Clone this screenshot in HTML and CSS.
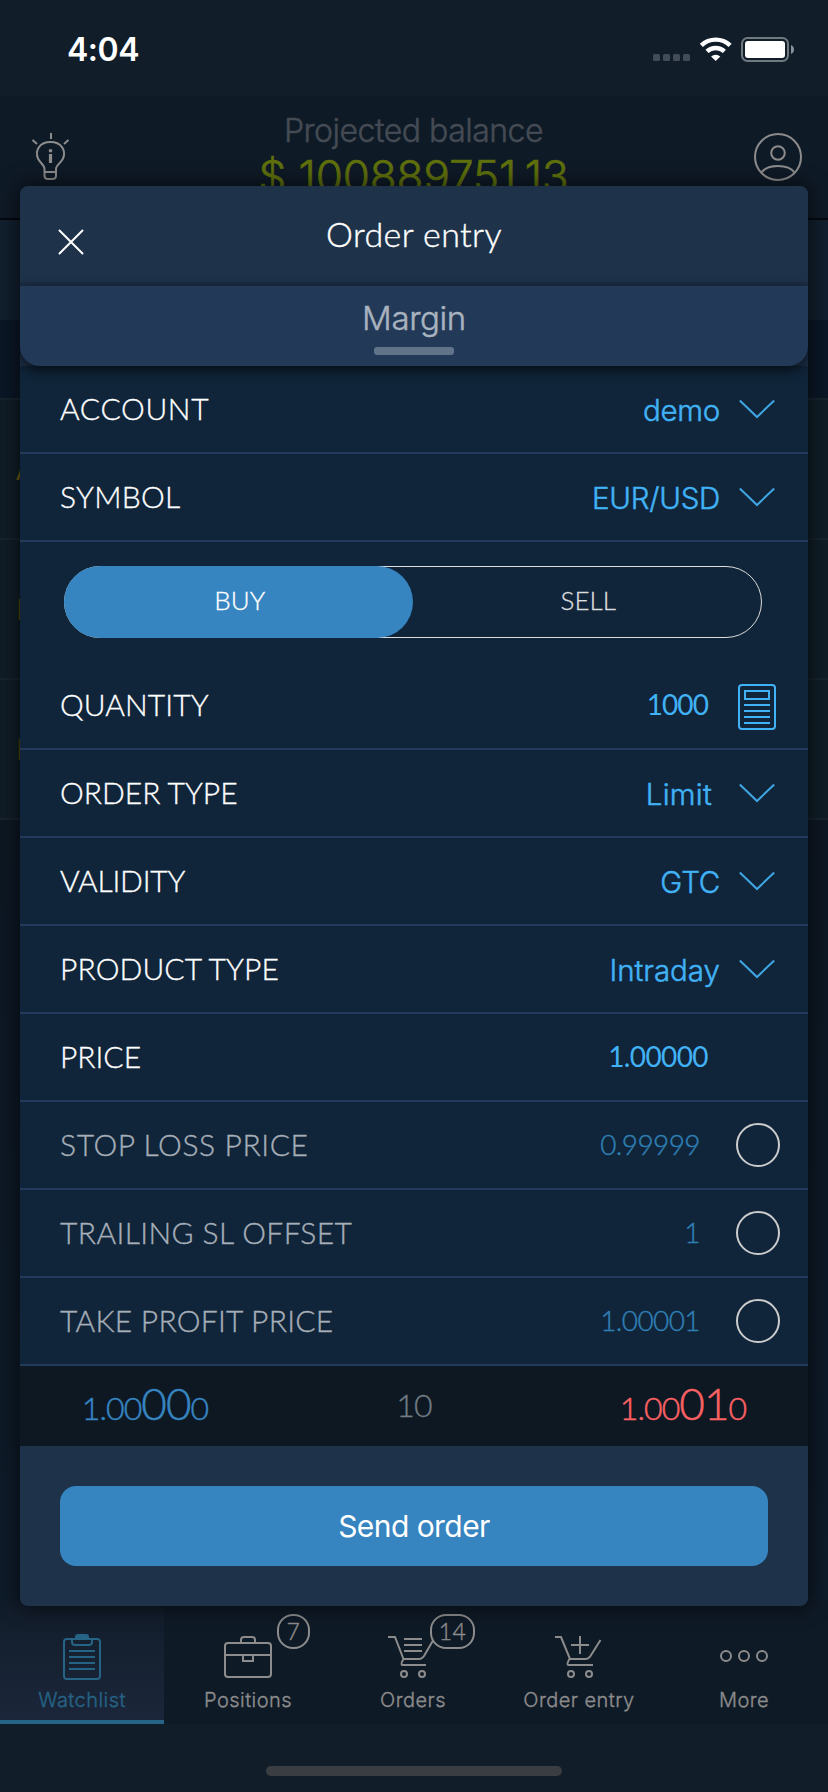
FILE: index.html
```html
<!DOCTYPE html>
<html lang="en">
<head>
<meta charset="utf-8">
<title>Order entry</title>
<link rel="stylesheet" href="styles.css">
</head>
<body>
<div class="screen">
  <header class="status">
    <span class="time">4:04</span>
    <svg class="status-icons" width="144" height="30" viewBox="652 35 144 30">
      <g fill="#414c57"><rect x="653" y="54" width="7" height="7" rx="1.5"/><rect x="663" y="54" width="7" height="7" rx="1.5"/><rect x="673" y="54" width="7" height="7" rx="1.5"/><rect x="683" y="54" width="7" height="7" rx="1.5"/></g>
      <g fill="none" stroke="#fff" stroke-width="4.4"><path d="M701.3 45.3a21 21 0 0 1 28.800 0"/><path d="M707 51.400a12.800 12.800 0 0 1 17.400 0"/></g>
      <path d="M715.700 61l-4.600-4.400a6.800 6.800 0 0 1 9.200 0z" fill="#fff"/>
      <rect x="742" y="38" width="46" height="23" rx="5.5" fill="none" stroke="#707880" stroke-width="2"/>
      <rect x="745" y="41" width="40" height="17" rx="3" fill="#fff"/>
      <path d="M791 45q3 1.500 3 4.500t-3 4.500z" fill="#8a9299"/>
    </svg>
  </header>
  <div class="account-bar">
    <svg class="bulb" width="46" height="52" viewBox="28 130 46 52" fill="none" stroke="#8c8c8c" stroke-width="2">
      <path d="M51 133v6M32.500 140l4.500 4M68.500 140l-4.500 4"/>
      <path d="M44.500 172V169C44.500 165 40 163 38 158.500C34.500 150 40 142 50.500 142S66.500 150 63 158.500C61 163 56 165 56 169V172zM44.500 172V175.500Q44.500 179 48 179H52.500Q56 179 56 175.500V172"/>
      <path d="M50.500 149.300v3M50.500 154v9" stroke-width="3.200"/>
    </svg>
    <div class="balance">
      <div class="balance-title">Projected balance</div>
      <div class="balance-value">$ 100889751.13</div>
    </div>
    <svg class="user" width="50" height="50" viewBox="753 132 50 50" fill="none" stroke="#8c8c8c" stroke-width="2">
      <circle cx="778" cy="157" r="23"/><circle cx="778" cy="153" r="6.800"/><path d="M761.500 172.500C765 167.500 772 166 778 166S791 167.500 794.500 172.500"/>
    </svg>
  </div>
  <div class="watch-top"></div>
  <div class="watch-head"></div>
  <div class="watch-row">A</div>
  <div class="watch-row dim">E</div>
  <div class="watch-row dim">E</div>
  <div class="watch-rest"></div>
  <nav class="tabs">
    <div class="tab active">
      <svg width="48" height="50" viewBox="58 1630 48 50" fill="none" stroke="#266485" stroke-width="2"><rect x="64" y="1639" width="36" height="40" rx="3"/><path d="M72 1639v3q0 3 3 3h14q3 0 3-3v-3"/><path d="M75 1639v-2q0-3 3-3h8q3 0 3 3v2z" fill="#266485" stroke="none"/><path d="M69 1651h26M69 1657h26M69 1663h26M69 1669h26"/></svg>
      <span class="t1">Watchlist</span>
    </div>
    <div class="tab">
      <svg width="52" height="50" viewBox="222 1630 52 50" fill="none" stroke="#8c8c8c" stroke-width="2"><rect x="225" y="1643" width="46" height="34" rx="3"/><path d="M241 1643v-3q0-3 3-3h8q3 0 3 3v3M225 1655h46M243 1655v6h10v-6"/></svg>
      <span class="t2">Positions</span>
      <b class="badge b7">7</b>
    </div>
    <div class="tab">
      <svg width="52" height="50" viewBox="388 1630 52 50" fill="none" stroke="#8c8c8c" stroke-width="2"><path d="M389 1637h7l8.500 22h15.500q3 0 5-3l9-15.500M404.500 1659q-3 5-1.500 6h24M405 1639h18M405 1645h18M405 1651h18"/><circle cx="405" cy="1674" r="3"/><circle cx="423" cy="1674" r="3"/></svg>
      <span class="t3">Orders</span>
      <b class="badge b14">14</b>
    </div>
    <div class="tab">
      <svg width="52" height="50" viewBox="553 1630 52 50" fill="none" stroke="#8c8c8c" stroke-width="2"><path d="M555 1637h6l9 22h15.500q3 0 5-3l10-16M569.500 1659q-3 5-1.500 6h25M571 1645h18M580 1636v18"/><circle cx="571" cy="1674" r="3"/><circle cx="589" cy="1674" r="3"/></svg>
      <span class="t4">Order entry</span>
    </div>
    <div class="tab">
      <svg width="52" height="50" viewBox="718 1630 52 50" fill="none" stroke="#8c8c8c" stroke-width="2"><circle cx="726" cy="1656" r="5"/><circle cx="744" cy="1656" r="5"/><circle cx="762" cy="1656" r="5"/></svg>
      <span class="t5">More</span>
    </div>
  </nav>
  <footer class="home"><div class="home-bar"></div></footer>

  <section class="modal">
    <div class="modal-head">
      <svg class="close" width="26" height="26" viewBox="0 0 26 26" fill="none" stroke="#fff" stroke-width="2" stroke-linecap="round"><path d="M1.500 1.500l23 23M24.500 1.500l-23 23"/></svg>
      <h1>Order entry</h1>
    </div>
    <div class="margin-wrap"><div class="margin"><span>Margin</span><i class="grip"></i></div></div>
    <div class="row"><label class="l1">ACCOUNT</label><span class="sel v1">demo</span><svg class="chev" viewBox="0 0 36 20"><path d="M.8 1.500L18 18 35.200 1.500"/></svg></div>
    <div class="row"><label class="l2">SYMBOL</label><span class="sel v2">EUR/USD</span><svg class="chev" viewBox="0 0 36 20"><path d="M.8 1.500L18 18 35.200 1.500"/></svg></div>
    <div class="toggle-wrap"><div class="toggle"><span class="buy">BUY</span><span class="sell">SELL</span></div></div>
    <div class="row"><label class="l3">QUANTITY</label><span class="num v3">1000</span><svg class="calc" width="38" height="46" viewBox="0 0 38 46" fill="none" stroke="#41b2f5" stroke-width="2"><rect x="1" y="1" width="36" height="44" rx="3"/><rect x="7" y="7" width="24" height="8"/><path d="M6 21h26M6 27h26M6 33h26M6 39h26"/></svg></div>
    <div class="row"><label class="l4">ORDER TYPE</label><span class="sel v4">Limit</span><svg class="chev" viewBox="0 0 36 20"><path d="M.8 1.500L18 18 35.200 1.500"/></svg></div>
    <div class="row"><label class="l5">VALIDITY</label><span class="sel v5">GTC</span><svg class="chev" viewBox="0 0 36 20"><path d="M.8 1.500L18 18 35.200 1.500"/></svg></div>
    <div class="row"><label class="l6">PRODUCT TYPE</label><span class="sel v6">Intraday</span><svg class="chev" viewBox="0 0 36 20"><path d="M.8 1.500L18 18 35.200 1.500"/></svg></div>
    <div class="row"><label class="l7">PRICE</label><span class="num v7">1.00000</span></div>
    <div class="row off"><label class="l8">STOP LOSS PRICE</label><span class="num v8">0.99999</span><i class="radio"></i></div>
    <div class="row off"><label class="l9">TRAILING SL OFFSET</label><span class="num v9">1</span><i class="radio"></i></div>
    <div class="row off"><label class="l10">TAKE PROFIT PRICE</label><span class="num v10">1.00001</span><i class="radio"></i></div>
    <div class="quotes"><span class="bid">1.00<big>00</big>0</span><span class="spread">10</span><span class="ask">1.00<big>01</big>0</span></div>
    <div class="send-wrap"><button class="send">Send order</button></div>
  </section>
</div>
</body>
</html>
```
FILE: styles.css
```css
* { box-sizing: border-box; }
body { margin: 0; background: #0f1a27; font-family: Inter, "Liberation Sans", sans-serif; }
svg { display: block; flex: none; }
.screen { position: relative; width: 828px; height: 1792px; overflow: hidden; display: flex; flex-direction: column; white-space: nowrap; }

.status { height: 96px; flex: none; background: #111e2a; display: flex; align-items: flex-start; justify-content: space-between; padding: 35px 32px 0 67px; }
.time { color: #fff; font-size: 32px; font-weight: 600; line-height: 30px; letter-spacing: -0.5px; }
.account-bar { height: 124px; flex: none; background: #0f1a27; border-bottom: 2px solid #04080f; display: flex; justify-content: space-between; align-items: flex-start; padding: 0 25px 0 28px; }
.bulb { margin-top: 34px; }
.user { margin-top: 36px; }
.balance { text-align: center; padding-top: 14px; }
.balance-title { color: #444b54; font-size: 32px; font-weight: 300; line-height: 41px; letter-spacing: -0.5px; -webkit-text-stroke: 0.5px; }
.balance-value { color: #5f700c; font-size: 44px; font-weight: 300; line-height: 43px; letter-spacing: -0.1px; padding-top: 4px; -webkit-text-stroke: 0.7px; }
.watch-top { height: 100px; flex: none; background: #121f2e; }
.watch-head { height: 80px; flex: none; background: #0b1726; border-bottom: 2px solid #18232e; }
.watch-row { height: 140px; flex: none; background: #101d27; border-bottom: 2px solid #18232e; font: 400 28px/138px Lato, sans-serif; color: #6f5c14; padding-left: 16px; }
.watch-row.dim { color: #54430f; }
.watch-rest { flex: 1; background: linear-gradient(#0d1723, #0e1b29); }

.tabs { height: 124px; flex: none; background: #0f1a27; display: grid; grid-template-columns: 164px 168px 162px 170px 160px; }
.tab { position: relative; padding-top: 30px; display: flex; flex-direction: column; align-items: center; color: #8c8c8c; font-size: 20px; font-weight: 300; line-height: 40px; letter-spacing: 0.45px; -webkit-text-stroke: 0.35px; }
.tab.active { color: #266485; background: linear-gradient(#111c2a, #1b263a); border-bottom: 4px solid #266485; }
.badge { position: absolute; top: 14px; height: 35px; border: 2px solid #8c8c8c; border-radius: 16px; background: #0f1a27; font: 300 23px/31px Lato, sans-serif; text-align: center; -webkit-text-stroke: 0.4px; }
.b7 { left: 113px; width: 33px; }
.b14 { left: 98px; width: 45px; }
.home { height: 68px; flex: none; background: #111e2a; padding: 42px 266px 0; }
.home-bar { height: 10px; border-radius: 5px; background: #3a3d41; }

.modal { position: absolute; left: 20px; top: 186px; width: 788px; height: 1420px; border-radius: 8px; overflow: hidden; background: #10253a; display: flex; flex-direction: column; }
.screen::after { content: ""; position: absolute; left: 20px; top: 186px; width: 788px; height: 1420px; border-radius: 8px; box-shadow: 0 0 20px 2px rgba(0,0,0,.6); pointer-events: none; }
.modal-head { position: relative; height: 100px; flex: none; background: #1e334a; border-bottom: 4px solid #1b2d45; display: flex; justify-content: center; }
.close { position: absolute; left: 37.500px; top: 43px; }
h1 { margin: 0; color: #fff; font: 300 34px/96px Lato, sans-serif; letter-spacing: 0.4px; -webkit-text-stroke: 0.4px; }
.margin-wrap { height: 80px; flex: none; background: #1e3049; }
.margin { position: relative; height: 80px; background: #223a58; border-radius: 0 0 20px 20px; box-shadow: 0 4px 14px rgba(0,0,0,.7); display: flex; flex-direction: column; align-items: center; padding-top: 11px; color: #a9b2bf; font-size: 33px; font-weight: 300; line-height: 42px; letter-spacing: -0.4px; -webkit-text-stroke: 0.5px; }
.grip { width: 80px; height: 8px; margin-top: 8px; border-radius: 3px; background: #617388; }
.row { height: 88px; flex: none; border-bottom: 2px solid #223b5a; padding: 0 28px 0 40px; display: flex; align-items: center; }
.row label { flex: 1; color: #fff; font: 300 30px/40px Lato, sans-serif; padding-bottom: 2px; -webkit-text-stroke: 0.35px; }
.row.off label { color: #a6aeb8; }
.l1 { letter-spacing: 0.65px; }
.l2 { letter-spacing: 0.3px; }
.l3, .l6 { letter-spacing: 0.1px; }
.l5 { letter-spacing: -0.2px; }
.l8 { letter-spacing: 0.6px; }
.l9 { letter-spacing: 0.4px; }
.l10 { letter-spacing: 0.25px; }
.sel { color: #41b2f5; font-size: 29.500px; font-weight: 300; -webkit-text-stroke: 0.5px; letter-spacing: -0.25px; line-height: 40px; padding-top: 2px; margin-right: 19px; }
.v4 { margin-right: 27px; letter-spacing: 0.25px; }
.v6 { letter-spacing: 0; }
.chev { width: 36px; height: 20px; margin-right: 5px; fill: none; stroke: #41a6e2; stroke-width: 2; }
.num { color: #41b2f5; font: 400 28px/40px Lato, sans-serif; letter-spacing: -0.600px; padding-bottom: 2px; }
.v3 { margin-right: 30px; letter-spacing: -0.9px; }
.calc { margin: 4px 4px 0 0; }
.v7 { margin-right: 72px; }
.off .num { color: #2f7fb3; font-weight: 300; margin-right: 36px; -webkit-text-stroke: 0.4px; }
.radio { width: 44px; height: 44px; border: 2px solid #ccc; border-radius: 50%; }
.toggle-wrap { height: 120px; flex: none; padding: 24px 46px 24px 44px; }
.toggle { height: 72px; border: 1px solid #ddd; border-radius: 36px; display: flex; }
.toggle span { flex: 1; text-align: center; color: #ddd; font: 300 26px/67px Lato, sans-serif; -webkit-text-stroke: 0.3px; }
.toggle .sell { padding-left: 3px; }
.toggle .buy { margin: -1px 0 -1px -1px; padding-left: 3px; line-height: 69px; border-radius: 36px; background: #3684c0; color: #fff; }
.quotes { height: 80px; flex: none; background: #0d1823; display: grid; grid-template-columns: 250px 288px 250px; text-align: center; font: 300 32px/80px Lato, sans-serif; letter-spacing: -0.9px; -webkit-text-stroke: 0.5px; }
.quotes big { font-size: 44px; line-height: 40px; }
.bid, .ask { padding-top: 2px; }
.bid { color: #3684c0; }
.ask { color: #fa6163; }
.spread { color: #737c85; line-height: 77px; -webkit-text-stroke: 0.3px; }
.send-wrap { height: 160px; padding: 40px; background: #1e334a; }
.send { display: block; width: 708px; height: 80px; border: 0; padding: 0; border-radius: 16px; background: #3684c0; color: #fff; font: 400 30px/80px Inter, sans-serif; letter-spacing: -0.55px; }
```
